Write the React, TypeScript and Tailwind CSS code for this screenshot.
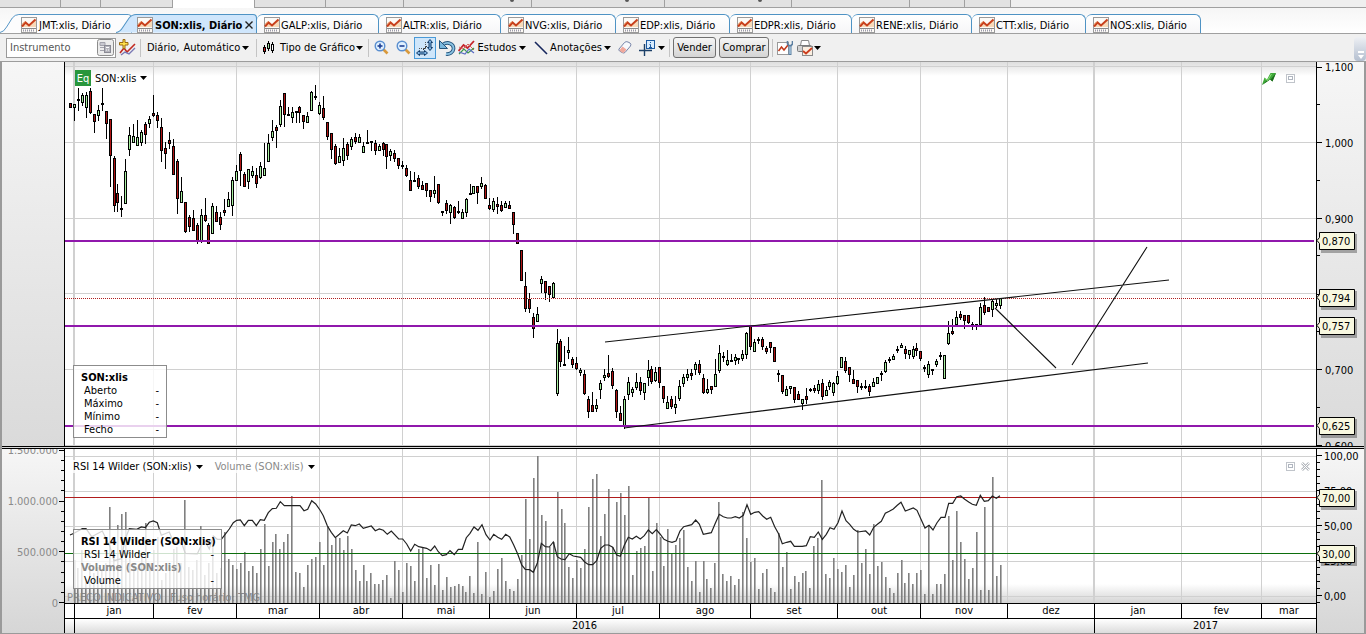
import { ReactNode } from "react"
import clsx from "clsx"

const PURPLE = "#9018ac"

// bars are stored in thirds of a pixel, relative to the origin of their block
// [x, high, top, bottom, low, rising]
type Bar = [number, number, number, number, number, number]

interface IBlock<T> {
  x: number
  y: number
  data: T[]
}

const candleBlocks: IBlock<Bar>[] = [
  {
    x: 0, y: 60, data: [
      [211, 130, 130, 142, 142, 0], [223, 133, 133, 142, 182, 1], [235, 84, 118, 122, 152, 0], [247, 100, 105, 127, 136, 1],
      [259, 98, 106, 142, 173, 1], [271, 86, 94, 157, 160, 0], [283, 163, 163, 185, 218, 0], [295, 136, 151, 166, 182, 1],
      [307, 84, 129, 134, 150, 0], [319, 154, 154, 190, 234, 0], [331, 178, 178, 286, 380, 0], [343, 290, 295, 436, 455, 0],
      [352, 373, 400, 428, 455, 0], [364, 408, 444, 447, 470, 0], [376, 298, 334, 430, 430, 1], [388, 202, 227, 268, 287, 1],
      [400, 193, 229, 247, 247, 1], [412, 181, 232, 256, 256, 1], [424, 211, 217, 247, 256, 1], [436, 187, 193, 223, 250, 0],
      [448, 169, 178, 190, 202, 1], [460, 106, 160, 166, 170, 0], [472, 157, 166, 181, 202, 0], [484, 175, 202, 271, 305, 0],
      [496, 247, 265, 281, 326, 0], [508, 217, 241, 250, 265, 0], [520, 238, 259, 343, 343, 0], [532, 298, 304, 415, 461, 0],
      [544, 352, 394, 427, 427, 1], [556, 427, 427, 515, 518, 0], [568, 466, 472, 499, 515, 0], [580, 451, 475, 511, 511, 0],
      [592, 490, 496, 545, 551, 0], [604, 448, 466, 545, 548, 1], [616, 415, 466, 480, 484, 0], [625, 490, 496, 550, 551, 0],
      [637, 430, 439, 520, 520, 1], [649, 439, 457, 485, 485, 0], [661, 457, 472, 493, 509, 0], [673, 418, 451, 458, 466, 0],
      [685, 397, 418, 439, 439, 1], [697, 352, 361, 436, 466, 1], [709, 316, 334, 361, 361, 1], [721, 277, 283, 331, 376, 0],
      [733, 337, 343, 379, 379, 0], [745, 328, 329, 364, 385, 1], [757, 319, 334, 346, 352, 1], [769, 325, 346, 370, 382, 0],
      [781, 307, 319, 352, 355, 1], [793, 250, 325, 346, 346, 1], [805, 223, 250, 304, 304, 1], [817, 181, 214, 233, 241, 1],
      [829, 197, 202, 212, 262, 0], [841, 121, 139, 194, 199, 1], [853, 100, 100, 163, 199, 0], [865, 142, 163, 166, 166, 0],
      [877, 142, 157, 173, 187, 1], [889, 155, 155, 158, 187, 0], [898, 139, 142, 157, 187, 0], [910, 166, 166, 184, 205, 0],
      [922, 157, 169, 187, 187, 1], [934, 94, 97, 151, 151, 1], [946, 76, 109, 112, 118, 0], [958, 127, 136, 160, 164, 1],
      [970, 109, 145, 173, 178, 0], [982, 187, 187, 230, 238, 0], [994, 220, 220, 268, 295, 0], [1006, 253, 259, 310, 313, 0],
      [1018, 265, 289, 307, 307, 1], [1030, 235, 265, 301, 316, 1], [1042, 247, 253, 286, 298, 0],
    ],
  },
  {
    x: 330, y: 80, data: [
      [64, 173, 178, 199, 208, 1], [76, 160, 172, 185, 190, 0], [88, 163, 172, 187, 187, 1], [100, 187, 199, 217, 217, 1],
      [112, 151, 187, 190, 190, 0], [124, 184, 184, 187, 211, 0], [136, 181, 190, 211, 223, 0], [148, 193, 199, 211, 211, 1],
      [160, 187, 190, 208, 226, 0], [169, 193, 193, 229, 265, 0], [181, 207, 213, 227, 240, 1], [193, 210, 220, 235, 245, 0],
      [205, 235, 235, 256, 265, 0], [217, 244, 255, 258, 266, 0], [229, 256, 265, 287, 290, 0], [241, 274, 301, 331, 331, 0],
      [253, 277, 301, 304, 304, 0], [265, 286, 295, 319, 326, 0], [277, 304, 316, 328, 328, 0], [289, 310, 310, 331, 350, 0],
      [301, 331, 331, 349, 364, 0], [313, 289, 331, 341, 353, 1], [325, 313, 313, 367, 371, 0], [337, 394, 394, 397, 406, 0],
      [349, 361, 370, 391, 400, 0], [361, 373, 376, 397, 431, 1], [373, 378, 382, 412, 415, 0], [385, 364, 393, 396, 400, 0],
      [397, 388, 397, 415, 415, 1], [409, 355, 358, 397, 409, 1], [421, 313, 341, 344, 344, 0], [430, 319, 319, 340, 340, 1],
      [442, 319, 319, 338, 371, 0], [454, 292, 310, 319, 326, 1], [466, 313, 316, 355, 355, 0], [478, 355, 376, 385, 388, 0],
      [490, 355, 364, 388, 394, 1], [502, 352, 373, 379, 401, 0], [514, 364, 376, 391, 394, 0], [526, 364, 370, 382, 382, 1],
      [538, 364, 376, 385, 385, 0], [550, 397, 397, 433, 461, 0], [562, 460, 460, 490, 490, 0], [574, 511, 511, 601, 601, 0],
      [586, 577, 619, 686, 695, 0], [598, 640, 658, 686, 698, 0], [610, 700, 712, 746, 772, 0], [622, 682, 703, 725, 725, 1],
      [634, 589, 598, 611, 637, 1], [646, 604, 604, 638, 659, 0], [658, 619, 619, 643, 665, 0], [670, 606, 610, 653, 655, 1],
    ],
  },
  {
    x: 480, y: 300, data: [
      [232, 88, 130, 280, 287, 1], [241, 118, 124, 185, 200, 0], [253, 139, 192, 195, 195, 0], [265, 112, 151, 157, 175, 1],
      [277, 172, 178, 193, 202, 0], [289, 172, 190, 205, 208, 0], [301, 205, 211, 217, 227, 1], [313, 211, 223, 280, 284, 0],
      [325, 289, 298, 334, 352, 0], [337, 277, 316, 334, 334, 0], [349, 298, 316, 326, 334, 1], [361, 241, 250, 268, 296, 1],
      [373, 208, 226, 233, 241, 1], [385, 166, 221, 229, 233, 0], [397, 205, 214, 257, 264, 0], [409, 268, 271, 334, 352, 0],
      [421, 320, 340, 361, 361, 0], [433, 290, 298, 379, 385, 1], [445, 232, 247, 283, 298, 1], [457, 262, 268, 277, 290, 1],
      [469, 220, 247, 262, 268, 1], [481, 232, 247, 271, 283, 0], [493, 250, 250, 277, 298, 1], [505, 181, 211, 232, 256, 1],
      [514, 200, 208, 244, 250, 0], [526, 202, 217, 242, 244, 1], [538, 202, 202, 247, 262, 0], [550, 259, 259, 296, 308, 0],
      [562, 290, 307, 325, 325, 1], [574, 289, 298, 319, 325, 0], [586, 289, 313, 322, 340, 1], [598, 241, 259, 296, 301, 1],
      [610, 223, 232, 250, 259, 1], [622, 208, 223, 233, 240, 1], [634, 208, 220, 226, 238, 0], [646, 187, 193, 208, 223, 1],
      [658, 181, 193, 217, 223, 0], [670, 223, 235, 277, 281, 0], [682, 238, 268, 277, 281, 1], [694, 260, 260, 268, 281, 0],
      [706, 178, 223, 259, 259, 1], [718, 136, 160, 212, 217, 1], [730, 157, 169, 172, 184, 0], [742, 151, 182, 194, 197, 1],
      [754, 163, 182, 185, 185, 0], [766, 163, 172, 181, 193, 1], [775, 176, 176, 179, 191, 0], [787, 150, 163, 176, 181, 1],
      [799, 97, 100, 163, 176, 1], [811, 79, 79, 139, 148, 0], [823, 118, 127, 154, 154, 1], [835, 112, 118, 122, 130, 0],
      [847, 112, 118, 139, 148, 0], [859, 139, 145, 154, 160, 0], [871, 128, 128, 142, 157, 0], [883, 142, 142, 184, 184, 0],
    ],
  },
  {
    x: 760, y: 280, data: [
      [55, 270, 281, 284, 304, 0], [67, 287, 287, 334, 340, 0], [79, 320, 328, 346, 346, 1], [91, 320, 320, 326, 340, 1],
      [103, 322, 322, 358, 367, 0], [115, 334, 343, 358, 358, 0], [127, 358, 358, 370, 388, 1], [139, 325, 349, 358, 370, 0],
      [151, 325, 328, 331, 334, 0], [163, 316, 325, 331, 337, 0], [175, 302, 314, 331, 340, 1], [187, 298, 310, 350, 358, 0],
      [199, 320, 331, 346, 346, 1], [208, 301, 307, 320, 329, 1], [220, 308, 311, 338, 346, 1], [232, 274, 290, 310, 314, 1],
      [244, 232, 232, 262, 262, 1], [256, 232, 244, 271, 277, 0], [268, 262, 262, 283, 304, 0], [280, 271, 298, 310, 310, 0],
      [292, 302, 302, 320, 337, 0], [304, 310, 319, 322, 328, 0], [316, 302, 318, 321, 325, 0], [328, 313, 320, 334, 346, 0],
      [340, 295, 308, 320, 320, 1], [352, 292, 292, 310, 310, 1], [364, 274, 281, 284, 301, 0], [376, 241, 247, 274, 278, 1],
      [388, 232, 238, 241, 247, 0], [400, 223, 229, 238, 238, 1], [412, 200, 208, 211, 217, 0], [424, 190, 196, 203, 203, 1],
      [436, 199, 208, 220, 235, 0], [448, 211, 211, 223, 235, 1], [460, 199, 207, 230, 235, 1], [469, 190, 205, 211, 226, 0],
      [481, 214, 214, 235, 241, 0], [493, 256, 263, 266, 274, 0], [505, 244, 253, 283, 292, 1], [517, 269, 269, 272, 284, 0],
      [529, 238, 244, 253, 259, 1], [541, 217, 226, 229, 238, 0], [553, 226, 227, 295, 295, 1], [565, 124, 160, 191, 193, 1],
      [577, 118, 154, 160, 163, 0], [589, 94, 112, 133, 138, 1], [601, 95, 103, 112, 119, 0], [613, 107, 107, 122, 145, 0],
      [625, 107, 107, 127, 130, 0], [637, 128, 133, 136, 148, 0], [649, 134, 134, 137, 148, 0], [661, 71, 83, 134, 134, 1],
      [673, 52, 77, 97, 104, 0], [685, 83, 83, 95, 95, 0], [697, 58, 65, 89, 109, 1], [709, 58, 70, 77, 82, 1],
      [721, 56, 56, 77, 86, 1],
    ],
  },
]

const rsiBlocks: IBlock<[number, number]>[] = [
  {
    x: 0, y: 350, data: [
      [210, 555], [222, 550], [247, 536], [258, 536], [275, 560], [307, 543], [330, 590], [342, 632], [364, 626], [376, 566],
      [388, 536], [410, 538], [424, 531], [436, 533], [448, 517], [460, 513], [472, 518], [484, 556], [508, 546], [520, 575],
      [545, 580], [556, 610], [592, 612], [604, 585], [616, 575], [628, 597], [640, 558], [652, 568], [664, 568], [688, 537],
      [700, 518], [710, 511], [721, 510], [733, 527], [745, 511], [757, 511], [769, 527], [781, 509], [793, 511], [805, 488],
      [817, 476], [829, 475], [841, 455], [853, 467], [900, 467], [912, 482], [923, 478], [935, 452], [947, 462], [960, 480],
      [970, 497], [982, 527], [994, 547], [1006, 563], [1018, 553], [1030, 542], [1042, 549], [1054, 525],
    ],
  },
  {
    x: 340, y: 440, data: [
      [46, 257], [58, 252], [70, 265], [94, 258], [106, 272], [118, 267], [130, 271], [142, 283], [154, 273], [176, 297],
      [188, 297], [200, 312], [212, 333], [224, 313], [236, 320], [260, 325], [272, 332], [284, 318], [295, 335], [307, 347],
      [319, 344], [330, 332], [343, 344], [355, 328], [367, 328], [379, 293], [390, 280], [402, 261], [414, 271], [426, 254],
      [438, 284], [450, 300], [461, 283], [473, 292], [485, 298], [497, 283], [509, 291], [521, 315], [533, 342], [545, 375],
      [556, 388], [569, 389], [580, 397], [592, 370], [604, 310], [616, 320], [628, 321], [640, 306], [652, 350], [663, 357],
      [675, 359], [688, 341], [700, 348], [722, 352], [734, 366], [746, 374], [758, 374], [770, 362], [782, 325], [794, 315],
      [806, 315], [818, 322], [830, 345], [841, 349], [853, 316], [865, 292], [877, 297], [889, 289], [901, 297], [913, 287],
      [925, 270], [937, 281], [949, 269], [960, 282], [972, 298], [984, 304], [996, 307], [1008, 303], [1020, 273], [1031, 260],
      [1055, 254], [1067, 240],
    ],
  },
  {
    x: 680, y: 440, data: [
      [58, 252], [70, 283], [94, 278], [106, 250], [118, 223], [130, 230], [142, 234], [154, 234], [166, 230], [178, 234],
      [190, 226], [201, 194], [212, 223], [224, 217], [236, 215], [248, 228], [260, 238], [272, 232], [284, 260], [296, 282],
      [307, 311], [320, 307], [332, 304], [343, 319], [367, 319], [379, 317], [391, 290], [403, 292], [415, 276], [427, 298],
      [439, 283], [450, 263], [462, 268], [474, 248], [486, 213], [498, 242], [509, 253], [521, 268], [533, 276], [557, 273],
      [569, 285], [581, 262], [593, 252], [604, 244], [616, 220], [628, 214], [640, 207], [652, 196], [663, 187], [676, 213],
      [700, 204], [711, 211], [723, 238], [735, 264], [747, 256], [759, 270], [771, 248], [783, 232], [795, 232], [806, 190],
      [818, 190], [830, 170], [842, 168], [854, 178], [866, 186], [877, 193], [889, 196], [901, 166], [913, 184], [925, 182],
      [937, 168], [949, 175], [960, 167],
    ],
  },
]

// tops of the volume bars, one every 11.88 thirds of a pixel
const volumeBlocks: IBlock<number>[] = [
  {
    x: 74, y: 350, data: [
      630, 655, 600, 688, 640, 668, 650, 660, 640, 472, 610, 525, 492, 487, 600, 640, 655, 620, 520, 640, 600, 560, 690, 670,
      655, 598, 590, 640, 451, 650, 660, 630, 528, 675, 640, 560, 668, 655, 545, 627, 645, 658, 640, 607, 663, 648, 670, 598,
      522, 647, 575, 553, 596, 577, 553, 437, 667, 668, 710, 646, 627, 620, 577, 644, 527, 585, 563, 565, 600, 558, 597, 661, 692,
    ],
  },
  {
    x: 363, y: 440, data: [
      376, 424, 400, 433, 432, 420, 406, 473, 363, 391, 457, 368, 379, 422, 328, 320, 413, 374, 436, 373, 450, 410, 442, 439,
      433, 438, 455, 409, 460, 306, 462, 395, 471, 453, 387, 353, 424, 447, 452, 418, 345, 178, 297, 115, 49, 225, 243, 320,
      305, 156, 206, 250, 380, 415, 361, 384, 326, 200, 117, 102, 287, 223, 147, 320, 187, 160, 225, 138, 406, 333, 325, 319,
      174, 392, 249, 290, 378, 268, 343, 314, 295, 270, 382, 422, 362, 455,
    ],
  },
  {
    x: 703, y: 440, data: [
      363, 417, 445, 368, 187, 403, 423, 407, 434, 416, 217, 294, 365, 354, 446, 398, 387, 443, 455, 280, 381, 335, 448, 408,
      427, 399, 393, 445, 317, 294, 120, 402, 414, 353, 387, 396, 375, 440, 404, 270, 370, 328, 402, 252, 378, 367, 411, 443,
      459, 400, 361, 430, 400, 433, 400, 390, 462, 255, 462, 432, 433, 403, 228, 361, 213, 305, 358, 417, 385, 275, 450, 202,
      450, 111, 408, 374,
    ],
  },
]

const monthLines = [153, 236, 319, 402, 489, 576, 659, 750, 837, 920, 1007, 1181, 1261]
const yearLines = [74, 1094]
const PLOT_WIDTH = 1251

const months = [
  { label: "", span: 10 },
  { label: "jan", span: 79 },
  { label: "fev", span: 83 },
  { label: "mar", span: 83 },
  { label: "abr", span: 83 },
  { label: "mai", span: 87 },
  { label: "jun", span: 87 },
  { label: "jul", span: 83 },
  { label: "ago", span: 91 },
  { label: "set", span: 87 },
  { label: "out", span: 83 },
  { label: "nov", span: 87 },
  { label: "dez", span: 87 },
  { label: "jan", span: 87 },
  { label: "fev", span: 80 },
  { label: "mar", span: 54 },
]

const years = [
  { label: "", span: 10 },
  { label: "2016", span: 1020 },
  { label: "2017", span: 221 },
]

const tabs = [
  { name: "GALP:xlis, Diário", width: "w-[122px]" },
  { name: "ALTR:xlis, Diário", width: "w-[122px]" },
  { name: "NVG:xlis, Diário", width: "w-[115px]" },
  { name: "EDP:xlis, Diário", width: "w-[114px]" },
  { name: "EDPR:xlis, Diário", width: "w-[122px]" },
  { name: "RENE:xlis, Diário", width: "w-[120px]" },
  { name: "CTT:xlis, Diário", width: "w-[114px]" },
  { name: "NOS:xlis, Diário", width: "w-[115px]" },
]

/* ---------- icons ---------- */

const ChartIcon = () => (
  <svg width="16" height="16" viewBox="0 0 16 16" className="shrink-0">
    <rect x="0.5" y="0.5" width="15" height="15" fill="#fdfaf6" stroke="#9a9a9a" />
    <path d="M1 9 5 5l3 3 7-6v8H1Z" fill="#f7d9b8" />
    <path d="M1 9.500 4.500 5.500l3.500 3L14.500 2.500" fill="none" stroke="#c8401c" strokeWidth="2" />
    <path d="M1 7.500 4 4.500" stroke="#e58a4a" />
    <path d="M1 11.500h14" stroke="#888" />
    <path d="M2 13.500h12" stroke="#9a9aaa" strokeWidth="2" strokeDasharray="1 1" />
  </svg>
)

const Caret = () => (
  <svg width="7" height="4" viewBox="0 0 7 4" className="shrink-0"><path d="M0 0h7L3.500 4Z" fill="#000" /></svg>
)

const InstrumentIcon = () => (
  <svg width="17" height="17" viewBox="0 0 17 17">
    <rect x="0.500" y="0.500" width="16" height="16" rx="2" fill="#ececec" stroke="#8c8c8c" />
    <path d="M3 3.500h5v3H3zM3 8.500h4M3 11.500h4" fill="#c8c8d0" stroke="#a2a2ac" />
    <rect x="7.500" y="6.500" width="6" height="7" fill="#b4b4bc" stroke="#8a8a94" />
    <path d="M9 8.500h3M9 11h1M11 11h1" stroke="#fff" />
  </svg>
)

const AddStudyIcon = () => (
  <svg width="17" height="17" viewBox="0 0 17 17">
    <path d="m1 14 4-5 3 4 8-8" fill="none" stroke="#c22a22" strokeWidth="1.600" />
    <path d="m2 16 4-3 4 2 6-6" fill="none" stroke="#7a78b4" strokeWidth="1.400" />
    <path d="M4 0.500h2v3h3V6H6v3.500H4V6H0.500V3.500H4Z" fill="#ffe14a" stroke="#9a6a10" />
  </svg>
)

const CandlesIcon = () => (
  <svg width="13" height="16" viewBox="0 0 13 16">
    <path d="M2.500 5v9M6.500 1v10M10.500 2v11" stroke="#000" />
    <rect x="1.500" y="7.500" width="2" height="4" fill="#c22" stroke="#000" />
    <rect x="5.500" y="3.500" width="2" height="5" fill="#9bd89b" stroke="#000" />
    <rect x="9.500" y="4.500" width="2" height="6" fill="#fff" stroke="#000" />
  </svg>
)

const ZoomIcon = ({ plus }: { plus?: boolean }) => (
  <svg width="15" height="15" viewBox="0 0 15 15">
    <path d="m9 9 4.500 4.500" stroke="#d99a3c" strokeWidth="2.600" />
    <circle cx="6" cy="6" r="4.800" fill="#dff0ff" stroke="#5a8fd0" strokeWidth="1.400" />
    <path d="M3.500 6h5" stroke="#1d3f94" strokeWidth="1.600" />
    {plus && <path d="M6 3.500v5" stroke="#1d3f94" strokeWidth="1.600" />}
  </svg>
)

const ResizeIcon = () => (
  <svg width="18" height="18" viewBox="0 0 18 18">
    <path d="m14 0.500 2.500 3h-1.500v5h1.500L14 11.500l-2.500-3H13v-5h-1.500Z" fill="#7fb4e4" stroke="#123a66" />
    <path d="m0.500 14 3-2.500V13h5v-1.500l3 2.500-3 2.500V15h-5v1.500Z" fill="#7fb4e4" stroke="#123a66" />
    <path d="M3 9.500h6.500V3" fill="none" stroke="#555" strokeDasharray="1 1" />
    <path d="m7 11 4-4" stroke="#333" />
  </svg>
)

const UndoIcon = () => (
  <svg width="17" height="16" viewBox="0 0 17 16">
    <path d="M4 4.500C9 1 15 4 14.500 9c-.4 3.500-4 5.500-7.500 5" fill="none" stroke="#24547c" strokeWidth="3.600" />
    <path d="M4 4.500C9 1 15 4 14.500 9c-.4 3.500-4 5.500-7.500 5" fill="none" stroke="#8cc4e4" strokeWidth="1.800" />
    <path d="M0.500 0.500v8h8Z" fill="#7ab8de" stroke="#24547c" />
  </svg>
)

const StudiesIcon = () => (
  <svg width="17" height="15" viewBox="0 0 17 15">
    <path d="m0.500 11 5-6 4 3L16 1" fill="none" stroke="#c4242a" strokeWidth="1.800" />
    <path d="m1 7 4 2 5-5 6 6" fill="none" stroke="#d8645c" />
    <path d="m1 14 5-5 4 4 6-5" fill="none" stroke="#3a9a4a" strokeWidth="1.200" />
    <path d="m1 12 6 2 4-5 5 4" fill="none" stroke="#5a6ac4" strokeWidth="1.200" />
  </svg>
)

const LineIcon = () => (
  <svg width="14" height="14" viewBox="0 0 14 14"><path d="m1 1 12 12" stroke="#16265c" strokeWidth="1.600" /></svg>
)

const EraserIcon = () => (
  <svg width="14" height="13" viewBox="0 0 14 13">
    <path d="M1 8 6.500 1.500Q8 0 10 1l2 1q1.500 1 .5 3L7 11.500q-1.500 1-3 0L1.500 10Q0.500 9 1 8Z" fill="#f6f8fc" stroke="#7684a8" />
    <path d="M2 8.500 4.500 5.500l4 3-2.500 3q-1 .5-2 0L2 10Q1.500 9.500 2 8.500Z" fill="#f0a89c" />
  </svg>
)

const CrosshairIcon = () => (
  <svg width="17" height="16" viewBox="0 0 17 16">
    <path d="M0 10.500h13M5.500 4v12" stroke="#1c4068" strokeWidth="1.400" />
    <rect x="7.500" y="0.500" width="8" height="8" fill="#d8ecff" stroke="#1c5aa0" />
    <path d="M11.500 2v1M10.500 4.500h1V7M10 7.500h3" fill="none" stroke="#1c5aa0" />
  </svg>
)

const ChartToolsIcon = () => (
  <svg width="16" height="16" viewBox="0 0 16 16">
    <rect x="0.500" y="2.500" width="11" height="12" fill="#fff" stroke="#9a9a9a" />
    <path d="m1.500 11 3-4 2.500 3 4-5" fill="none" stroke="#c23a1c" strokeWidth="1.500" />
    <path d="M13 6v9" stroke="#5a7ea0" strokeWidth="3" />
    <path d="M13 6v8" stroke="#b8d4ea" strokeWidth="1.200" />
    <path d="M10.500 1v3q2.500 3.500 5 0V1" fill="none" stroke="#5a7ea0" strokeWidth="1.600" />
  </svg>
)

const PrintChartIcon = () => (
  <svg width="17" height="16" viewBox="0 0 17 16">
    <path d="M4.500 0.500h7l1 5h-9Z" fill="#fff" stroke="#888" />
    <rect x="0.500" y="5.500" width="14" height="6" rx="1" fill="#d2d2d2" stroke="#7a7a7a" />
    <rect x="5.500" y="6.500" width="10" height="9" fill="#fbeee0" stroke="#8a8a8a" />
    <path d="m6 11 3 2.500L15 8" fill="none" stroke="#cc3c1c" strokeWidth="1.800" />
  </svg>
)

const TrendArrowIcon = () => (
  <svg width="14" height="13" viewBox="0 0 14 13">
    <path d="M0 13 2.500 5.500 5 7.500 8.500 1H14L10.500 9.500 8 7.500 4.500 10Z" fill="#3fa83a" />
    <path d="M0 13 4.500 10 8 7.500l2.500 2L14 1 9 7 5 8.500Z" fill="#1c6a1c" />
    <path d="m3 6.500 2.500 2L9.500 2" fill="none" stroke="#8ee07a" />
  </svg>
)

const MaximizeIcon = () => (
  <svg width="9" height="9" viewBox="0 0 9 9">
    <rect x="0.500" y="0.500" width="8" height="8" fill="#fff" stroke="#c0c4ca" />
    <rect x="2.500" y="2.500" width="4" height="3" fill="#fff" stroke="#b0b6c0" />
  </svg>
)

const CloseIcon = () => (
  <svg width="9" height="9" viewBox="0 0 9 9">
    <path d="m1 1 7 7M8 1 1 8" stroke="#b4b8be" strokeWidth="2.600" />
    <path d="m1 1 7 7M8 1 1 8" stroke="#fff" />
  </svg>
)

/* ---------- top bars ---------- */

const TopStrip = () => (
  <div className="flex h-2 bg-white">
    <div className="flex w-[173px] border-r border-b border-[#a0a0a0] bg-[#e2e2e2]">
      <div className="w-[61px] border-r border-[#a0a0a0]" />
      <div className="w-10 border-r border-[#a0a0a0]" />
    </div>
    <div className="w-[81px]" />
    <div className="flex flex-1 border-b border-l border-[#a0a0a0] bg-[#efefef]">
      <div className="w-[71px] border-r border-[#a0a0a0] bg-[#e2e2e2]" />
      <div className="w-[78px] border-r border-[#a0a0a0] bg-[#e2e2e2]" />
      <div className="flex w-32 justify-end border-r border-[#a0a0a0] bg-[#e2e2e2] pr-[17px]"><div className="h-0.5 w-1 rounded-b-sm bg-[#555]" /></div>
      <div className="flex w-[133px] justify-end border-r border-[#a0a0a0] bg-[#e2e2e2] pr-[35px]"><div className="h-0.5 w-1 rounded-b-sm bg-[#555]" /></div>
      <div className="flex w-[127px] justify-end border-r border-[#a0a0a0] bg-[#e2e2e2] pr-[29px]"><div className="h-0.5 w-1 rounded-b-sm bg-[#555]" /></div>
      <div className="w-[118px] border-r border-[#a0a0a0] bg-[#e2e2e2]" />
      <div className="w-[55px] border-r border-[#a0a0a0] bg-[#e2e2e2]" />
      <div className="w-[46px] border-r border-[#a0a0a0] bg-[#e2e2e2]" />
    </div>
  </div>
)

const SlantedTab = ({ name, active, className }: { name: string, active?: boolean, className: string }) => (
  <div className={clsx("relative flex h-[19px] items-center pt-[3px]", className)}>
    <svg className="absolute inset-0 h-full w-full" viewBox="0 0 140 19" preserveAspectRatio="none">
      <path
        d="M0 18.500Q4 18 7 13L13 4Q16 0.500 20 0.500H136Q139.500 0.500 139.500 4V19"
        fill={active ? "#cfe6fc" : "#fcfcfd"}
        stroke="#4f93c4"
      />
    </svg>
    <button role="tab" aria-selected={!!active} className={clsx("relative flex items-center gap-0.5 whitespace-nowrap", active && "font-bold")}>
      <ChartIcon />
      {name}
    </button>
    {active && (
      <button aria-label="Fechar" className="relative ml-auto">
        <svg width="8" height="8" viewBox="0 0 8 8"><path d="m0.500 0.500 7 7M7.500 0.500l-7 7" stroke="#222" strokeWidth="1.400" /></svg>
      </button>
    )}
  </div>
)

const TabStrip = () => (
  <div role="tablist" className="flex h-[26px] items-end overflow-hidden border-b border-[#a0a0a0] bg-linear-to-b from-[#f6f6f6] to-white">
    <SlantedTab name="JMT:xlis, Diário" className="w-[132px] pl-[21px]" />
    <SlantedTab name="SON:xlis, Diário" active className="z-10 -ml-4 w-[141px] pr-1 pl-[21px]" />
    {tabs.map((tab) => (
      <button
        key={tab.name}
        role="tab"
        aria-selected={false}
        className={clsx("flex h-[19px] shrink-0 items-center gap-px rounded-t-md border-t border-r border-[#4f93c4] bg-linear-to-b from-white to-[#f6f6f8] pt-0.5 pl-[7px] whitespace-nowrap", tab.width)}
      >
        <ChartIcon />
        {tab.name}
      </button>
    ))}
  </div>
)

const Separator = () => <div className="h-[18px] w-px shrink-0 bg-[#c4c4c4]" />

const ToolButton = ({ label, className, children }: { label?: string, className: string, children: ReactNode }) => (
  <button aria-label={label} className={clsx("flex shrink-0 items-center whitespace-nowrap", className)}>{children}</button>
)

const Toolbar = () => (
  <div className="flex h-7 items-center border-b border-[#9c9c9c] bg-[#f0f0f0] pl-1.5">
    <div className="flex h-5 w-[110px] shrink-0 items-center border border-[#9a9a9a] bg-white pr-px pl-[3px]">
      <input aria-label="Instrumento" placeholder="Instrumento" className="min-w-0 flex-1 outline-none placeholder:text-[#555]" />
      <button aria-label="Procurar instrumento"><InstrumentIcon /></button>
    </div>
    <ToolButton label="Adicionar estudo" className="w-6 pl-[3px]"><AddStudyIcon /></ToolButton>
    <Separator />
    <ToolButton className="w-[115px] justify-between pr-[7px] pl-1.5">
      <span className="flex gap-1"><span>Diário,</span><span>Automático</span></span>
      <Caret />
    </ToolButton>
    <Separator />
    <ToolButton className="w-[111px] justify-between pr-[5px] pl-[5px]">
      <CandlesIcon />
      <span className="ml-1">Tipo de Gráfico</span>
      <Caret />
    </ToolButton>
    <Separator />
    <ToolButton label="Ampliar" className="w-[23px] pl-[5px]"><ZoomIcon plus /></ToolButton>
    <ToolButton label="Reduzir" className="w-[22px] pl-1"><ZoomIcon /></ToolButton>
    <ToolButton label="Ajustar" className="h-[22px] w-[22px] justify-center border border-[#4a9ad8] bg-[#cfe6fa]"><ResizeIcon /></ToolButton>
    <ToolButton label="Desfazer" className="w-[22px] pl-[3px]"><UndoIcon /></ToolButton>
    <ToolButton className="w-[68px] justify-between"><StudiesIcon /><span>Estudos</span><Caret /></ToolButton>
    <ToolButton className="w-[85px] justify-between pl-2"><LineIcon /><span>Anotações</span><Caret /></ToolButton>
    <ToolButton label="Apagar" className="w-7 pl-[7px]"><EraserIcon /></ToolButton>
    <ToolButton label="Cursor" className="w-[30px] justify-between pr-1"><CrosshairIcon /><Caret /></ToolButton>
    <Separator />
    <button className="ml-[3px] h-[21px] w-[43px] shrink-0 rounded-[3px] border border-[#707070] bg-linear-to-b from-[#f6f6f6] to-[#d4d4d4]">Vender</button>
    <button className="ml-[3px] h-[21px] w-[50px] shrink-0 rounded-[3px] border border-[#707070] bg-linear-to-b from-[#f6f6f6] to-[#d4d4d4]">Comprar</button>
    <div className="w-[3px] shrink-0" />
    <Separator />
    <ToolButton label="Propriedades" className="w-6 pl-1"><ChartToolsIcon /></ToolButton>
    <ToolButton label="Imprimir" className="w-6 justify-between"><PrintChartIcon /><Caret /></ToolButton>
    <div className="mt-0.5 ml-auto flex h-6 w-3 shrink-0 flex-col items-end justify-end gap-0.5 rounded-sm bg-linear-to-b from-[#eef0f4] to-[#b4bfd0] p-0.5">
      <div className="h-0.5 w-1.5 bg-white" />
      <svg width="6" height="4" viewBox="0 0 6 4"><path d="M0 0h6L3 4Z" fill="#fff" /></svg>
    </div>
  </div>
)

/* ---------- charts ---------- */

const Grid = ({ top, height, rows }: { top: number, height: number, rows: number[] }) => (
  <g fill="#d0d0d0">
    {rows.map((y) => <rect key={y} x="65" y={y} width={PLOT_WIDTH} height="1" />)}
    {monthLines.map((x) => <rect key={x} x={x} y={top} width="1" height={height} />)}
    {yearLines.map((x) => <rect key={x} x={x - 1} y={top} width="2" height={height} />)}
  </g>
)

const Candle = ({ x, y, bar }: { x: number, y: number, bar: Bar }) => {
  const cx = Math.floor(x + bar[0] / 3)
  const [high, top, bottom, low] = bar.slice(1, 5).map((v) => Math.floor(y + v / 3))
  return (
    <>
      <rect x={cx} y={high} width="1" height={low - high + 1} fill="#000" />
      <rect x={cx - 1} y={top} width="3" height={bottom - top + 1} fill="#000" />
      {bottom - top > 1 && (
        <rect x={cx} y={top + 1} width="1" height={bottom - top - 1} fill={bar[5] ? "#a8f0a0" : "#b01414"} />
      )}
    </>
  )
}

const PricePlot = () => (
  <svg className="block h-[384px] w-full" viewBox="65 62 1251 384" preserveAspectRatio="none">
    <defs>
      <linearGradient id="topShade" x1="0" y1="0" x2="0" y2="1">
        <stop offset="0" stopColor="#dedede" />
        <stop offset="1" stopColor="#fff" />
      </linearGradient>
    </defs>
    <rect x="65" y="62" width={PLOT_WIDTH} height="384" fill="#fff" />
    <rect x="65" y="62" width={PLOT_WIDTH} height="14" fill="url(#topShade)" />
    <Grid top={62} height={384} rows={[66, 142, 218, 293, 369, 445]} />
    {candleBlocks.map((block) => block.data.map((bar) => (
      <Candle key={`${block.x}-${bar[0]}`} x={block.x} y={block.y} bar={bar} />
    )))}
    <path d="M65 298.500H1314" stroke="#b02020" strokeDasharray="1 1" />
    <path d="M65 241H1314M65 326H1314M65 426H1314" stroke={PURPLE} strokeWidth="2" />
    <path d="M605 342 1169 280M624 428 1148 363M995 308 1056 368M1072 365 1147 247" fill="none" stroke="#111" strokeWidth="1.100" />
  </svg>
)

const rsiPoints = rsiBlocks
  .flatMap((block) => block.data.map(([px, py]) => `${(block.x + px / 3).toFixed(1)},${(block.y + py / 3).toFixed(1)}`))
  .join(" ")

const RsiPlot = () => (
  <svg className="block h-[154px] w-full" viewBox="65 449 1251 154" preserveAspectRatio="none">
    <defs>
      <linearGradient id="bottomShade" x1="0" y1="0" x2="0" y2="1">
        <stop offset="0" stopColor="#fff" />
        <stop offset="1" stopColor="#d4d4d4" />
      </linearGradient>
    </defs>
    <rect x="65" y="449" width={PLOT_WIDTH} height="154" fill="#fff" />
    <rect x="65" y="584" width={PLOT_WIDTH} height="19" fill="url(#bottomShade)" />
    <Grid top={449} height={154} rows={[456, 491, 526, 561, 596]} />
    <text x="67" y="601" fontSize="11" fill="#8a8a8a">PREÇO INDICATIVO&#160;&#160; Fuso horário: TMG</text>
    {volumeBlocks.map((block) => block.data.map((top, i) => {
      const y = Math.round(block.y + top / 3)
      return <rect key={`${block.x}-${i}`} x={Math.round(block.x + i * 3.96 - 0.500)} y={y} width="1.600" height={603 - y} fill="#808080" />
    }))}
    <path d="M65 497.500H1316" stroke="#b01c1c" />
    <path d="M65 553.500H1316" stroke="#0c6e0c" />
    <polyline points={rsiPoints} fill="none" stroke="#222" strokeWidth="1.200" />
  </svg>
)

const ValueTag = ({ y, value }: { y: number, value: string }) => (
  <g>
    <rect x="1321" y={y - 7} width="36" height="19" fill="#000" opacity="0.300" />
    <path d={`M1319.500 ${y - 8.500}h35v17h-35v-6l-2.500-3 2.500-3Z`} fill="#f8f8e0" stroke="#000" />
    <text x="1322" y={y + 4}>{value}</text>
  </g>
)

const PriceScale = () => (
  <svg className="block h-[384px] w-[47px] shrink-0 text-[11px]" viewBox="1317 62 47 384">
    {[67, 142, 218, 294, 369, 445].map((y) => <rect key={y} x="1317" y={y} width="5" height="1" />)}
    {[104, 180, 255, 331, 407].map((y) => <rect key={y} x="1317" y={y} width="3" height="1" />)}
    <text x="1325" y="71">1,100</text>
    <text x="1325" y="147">1,000</text>
    <text x="1325" y="223">0,900</text>
    <text x="1325" y="374">0,700</text>
    <text x="1325" y="450">0,600</text>
    <ValueTag y={241} value="0,870" />
    <ValueTag y={298} value="0,794" />
    <ValueTag y={326} value="0,757" />
    <ValueTag y={426} value="0,625" />
  </svg>
)

const rsiTicks = Array.from({ length: 22 }, (_, i) => 456 + i * 7)

const RsiScale = () => (
  <svg className="block h-[184px] w-[47px] shrink-0 text-[11px]" viewBox="1317 449 47 184">
    {rsiTicks.map((y, i) => <rect key={y} x="1317" y={y - 1} width={i % 5 === 0 ? 5 : 3} height="1" />)}
    <text x="1324" y="460">100,00</text>
    <text x="1324" y="495">75,00</text>
    <text x="1324" y="530">50,00</text>
    <text x="1324" y="565">25,00</text>
    <text x="1324" y="600">0,00</text>
    <ValueTag y={498} value="70,00" />
    <ValueTag y={554} value="30,00" />
  </svg>
)

const volumeTicks = Array.from({ length: 16 }, (_, i) => Math.round(602 - i * 10.15))

const VolumeScale = () => (
  <svg className="block h-[184px] w-[62px] shrink-0 text-[11px]" viewBox="2 449 62 184">
    {volumeTicks.map((y, i) => <rect key={y} x={i % 5 === 0 ? 59 : 61} y={y} width="5" height="1" />)}
    <g fill="#8a8a8a" textAnchor="end">
      <text x="58" y="454">1.500.000</text>
      <text x="58" y="505">1.000.000</text>
      <text x="58" y="556">500.000</text>
      <text x="58" y="607">0</text>
    </g>
  </svg>
)

const LegendTitle = ({ children, muted }: { children: ReactNode, muted?: boolean }) => (
  <div className={clsx("font-bold", muted && "text-[#8a8a8a]")}>{children}</div>
)

const LegendRow = ({ label }: { label: string }) => (
  <div className="flex justify-between pl-[3px]"><span>{label}</span><span>-</span></div>
)

const TimeRow = ({ cells, className }: { cells: { label: string, span: number }[], className: string }) => (
  <div className={clsx("flex h-[15px] border-t border-black leading-[14px]", className)}>
    {cells.map((cell, i) => (
      <div
        key={i}
        style={{ width: `${(cell.span / PLOT_WIDTH) * 100}%` }}
        className={clsx("overflow-hidden text-center", i < cells.length - 1 && "border-r border-black")}
      >
        {cell.label}
      </div>
    ))}
  </div>
)

const App = () => (
  <div className="w-full cursor-default overflow-hidden bg-[#f0f0f0] font-['DejaVu_Sans_Condensed','Noto_Sans',sans-serif] text-[11px] leading-[13px] text-black">
    <TopStrip />
    <TabStrip />
    <Toolbar />
    <main className="border-x-2 border-b border-[#9a9a9a]">
      <section className="flex bg-linear-to-b from-[#f6f6f6] to-[#dadada]">
        <div className="w-[62px] shrink-0" />
        <div className="relative min-w-0 flex-1 border-x border-black">
          <PricePlot />
          <div className="absolute inset-x-0 top-2 flex items-center pr-[21px] pl-2.5">
            <span className="flex h-4 w-4 items-center justify-center bg-[#28963c] text-white">Eq</span>
            <button className="ml-1 flex items-center gap-1">SON:xlis <Caret /></button>
            <button aria-label="Tendência" className="ml-auto"><TrendArrowIcon /></button>
            <button aria-label="Maximizar" className="ml-2.5"><MaximizeIcon /></button>
          </div>
          <div className="absolute bottom-2 left-2 w-[94px] border border-[#8c8c8c] bg-white/80 px-[7px] pt-[5px] pb-px">
            <LegendTitle>SON:xlis</LegendTitle>
            <LegendRow label="Aberto" />
            <LegendRow label="Máximo" />
            <LegendRow label="Mínimo" />
            <LegendRow label="Fecho" />
          </div>
        </div>
        <PriceScale />
      </section>
      <div className="h-[3px] border-y border-black bg-[#d8d8d8]" />
      <section className="flex bg-linear-to-b from-[#f6f6f6] to-[#d6d6d6]">
        <VolumeScale />
        <div className="min-w-0 flex-1 border-x border-black">
          <div className="relative">
            <RsiPlot />
            <div className="absolute inset-x-0 top-[11px] flex items-center gap-3 pr-1.5 pl-2">
              <button className="flex items-center gap-1 bg-white/80">RSI 14 Wilder (SON:xlis) <Caret /></button>
              <button className="flex items-center gap-1 bg-white/80 text-[#8a8a8a]">Volume (SON:xlis) <Caret /></button>
              <span className="ml-auto flex gap-1.5">
                <button aria-label="Maximizar"><MaximizeIcon /></button>
                <button aria-label="Fechar"><CloseIcon /></button>
              </span>
            </div>
            <div className="absolute bottom-3.5 left-2 w-[149px] border border-[#8c8c8c] bg-white/80 px-[7px] pt-[5px] pb-px whitespace-nowrap">
              <LegendTitle>RSI 14 Wilder (SON:xlis)</LegendTitle>
              <LegendRow label="RSI 14 Wilder" />
              <LegendTitle muted>Volume (SON:xlis)</LegendTitle>
              <LegendRow label="Volume" />
            </div>
          </div>
          <TimeRow cells={months} className="bg-white" />
          <TimeRow cells={years} className="bg-linear-to-b from-white to-[#dcdcdc]" />
        </div>
        <RsiScale />
      </section>
    </main>
  </div>
)

export default App
